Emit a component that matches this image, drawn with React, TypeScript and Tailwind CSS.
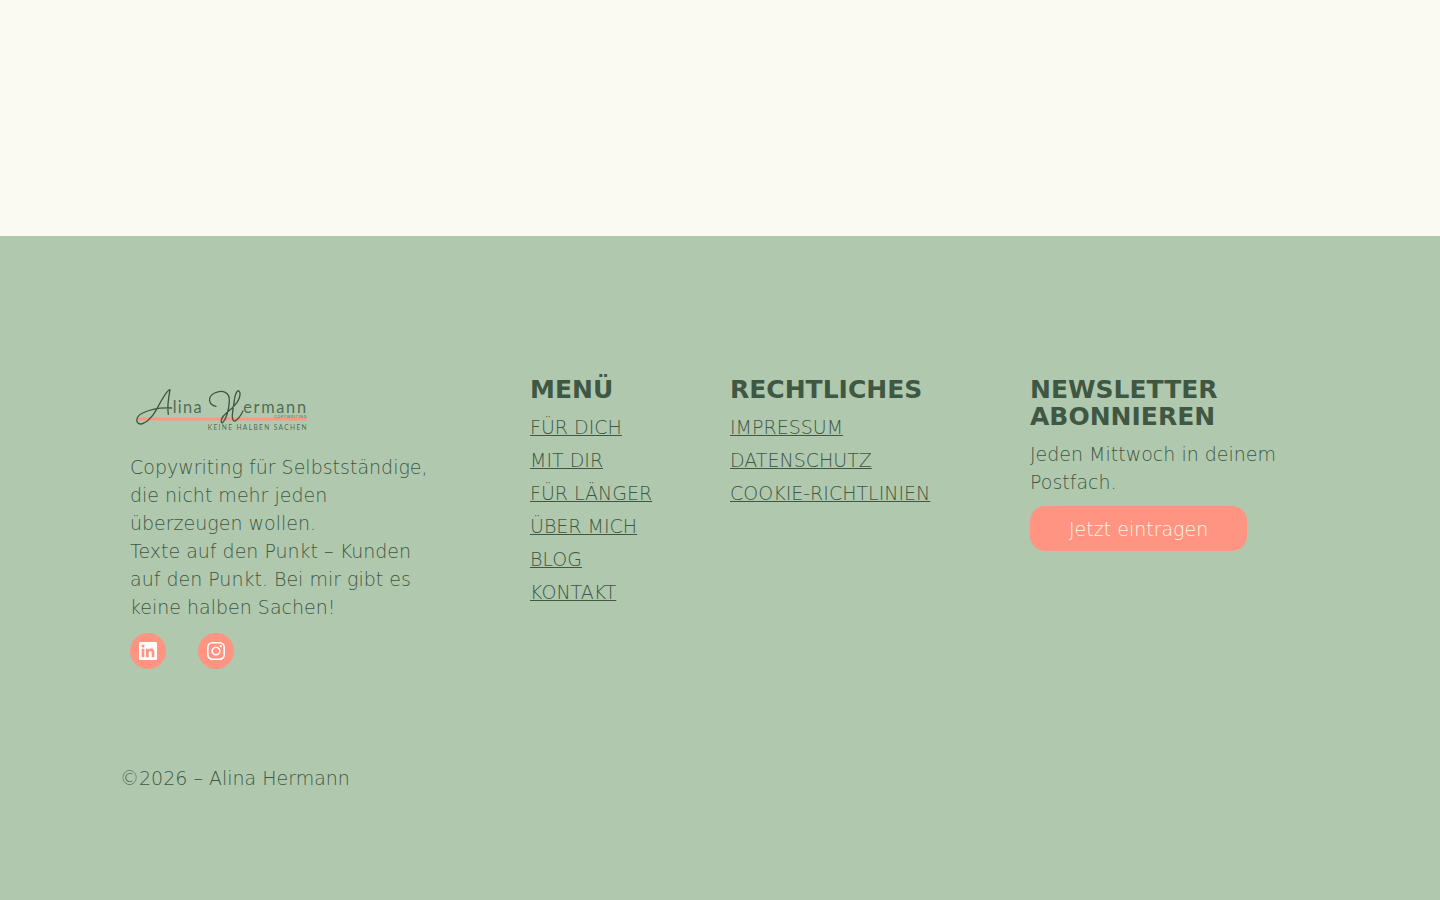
import React from 'react';

interface FooterLink {
  label: string;
  href: string;
}

interface LinkColumnProps {
  title: string;
  links: FooterLink[];
}

const menuLinks: FooterLink[] = [
  { label: 'FÜR DICH', href: '#fuer-dich' },
  { label: 'MIT DIR', href: '#mit-dir' },
  { label: 'FÜR LÄNGER', href: '#fuer-laenger' },
  { label: 'ÜBER MICH', href: '#ueber-mich' },
  { label: 'BLOG', href: '#blog' },
  { label: 'KONTAKT', href: '#kontakt' },
];

const legalLinks: FooterLink[] = [
  { label: 'IMPRESSUM', href: '#impressum' },
  { label: 'DATENSCHUTZ', href: '#datenschutz' },
  { label: 'COOKIE-RICHTLINIEN', href: '#cookie-richtlinien' },
];

const Logo: React.FC = () => (
  <svg viewBox="30 21 558 150" className="block w-[186px] h-[50px]" role="img" aria-label="Alina Hermann">
    <path d="M52 132H560" stroke="#ff9483" strokeWidth="9" />
    <g fill="none" stroke="#3f5743" strokeWidth="4" strokeLinecap="round" strokeLinejoin="round">
      <path d="M145 118C141 95 146 65 150 44C140 44 120 85 108 106C96 128 75 148 60 147C46 145 46 124 68 114C95 101 125 97 155 99" />
      <path d="M288 94C266 90 260 66 284 54C308 43 330 52 328 80C326 104 318 132 308 143C300 146 302 126 320 113C345 95 362 72 360 54C356 38 346 52 343 76C340 102 330 138 345 138C356 134 362 122 369 108" />
    </g>
    <g fill="#3f5743" fillOpacity="0.85" fontFamily="Lato, sans-serif" fontWeight="400">
      <text x="158" y="115" fontSize="49" letterSpacing="4">lina</text>
      <text x="370" y="115" fontSize="49" letterSpacing="5">ermann</text>
      <text x="463" y="128" fontSize="11" letterSpacing="2">COPYWRITING</text>
      <text x="263" y="164" fontSize="20" letterSpacing="4">KEINE HALBEN SACHEN</text>
    </g>
  </svg>
);

const Heading: React.FC<{ children: React.ReactNode }> = ({ children }) => (
  <h2 className="text-[25px] leading-[27px] font-bold uppercase">{children}</h2>
);

const LinkColumn: React.FC<LinkColumnProps> = ({ title, links }) => (
  <nav aria-label={title} className="px-[10px]">
    <Heading>{title}</Heading>
    <ul className="mt-[10px] space-y-[5px]">
      {links.map((link) => (
        <li key={link.href}>
          <a href={link.href} className="block underline whitespace-nowrap">{link.label}</a>
        </li>
      ))}
    </ul>
  </nav>
);

const App: React.FC = () => {
  return (
    <div className="min-h-screen flex flex-col bg-[#faf9f2] font-['DejaVu_Sans',sans-serif] text-[#3f5743]">
      <main className="h-[236px]" />

      <footer className="grow bg-[#b0c9ae] px-5 pt-[140px] pb-24 text-[19px] leading-7 font-extralight">
        <div className="max-w-[1200px] mx-auto">
          <div className="grid grid-cols-[4fr_2fr_3fr_3fr]">
            {/* Brand */}
            <div className="pt-1.5 pl-[10px] pr-20">
              <Logo />
              <p className="mt-[21px]">
                Copywriting für Selbstständige, die nicht mehr jeden überzeugen wollen.
                <br />
                Texte auf den Punkt – Kunden auf den Punkt. Bei mir gibt es keine halben Sachen!
              </p>
              <div className="mt-3 flex gap-8">
                <a href="#linkedin" aria-label="LinkedIn" className="size-9 rounded-full bg-[#ff9483] text-white flex items-center justify-center">
                  <svg viewBox="0 0 24 24" className="size-6" fill="currentColor">
                    <path d="M19.7 3H4.3C3.582 3 3 3.582 3 4.3v15.4c0 .718.582 1.3 1.3 1.3h15.4c.718 0 1.3-.582 1.3-1.3V4.3c0-.718-.582-1.3-1.3-1.3zM8.339 18.338H5.667v-8.59h2.672v8.59zM7.004 8.574a1.548 1.548 0 1 1 0-3.096 1.548 1.548 0 0 1 0 3.096zM18.339 18.338H15.67v-4.177c0-.996-.017-2.278-1.387-2.278-1.389 0-1.601 1.086-1.601 2.206v4.249h-2.667v-8.59h2.559v1.174h.037c.356-.675 1.227-1.387 2.526-1.387 2.703 0 3.203 1.779 3.203 4.092v4.711z" />
                  </svg>
                </a>
                <a href="#instagram" aria-label="Instagram" className="size-9 rounded-full bg-[#ff9483] text-white flex items-center justify-center">
                  <svg viewBox="0 0 24 24" className="size-6" fill="none" stroke="currentColor" strokeWidth="1.6">
                    <rect x="3.8" y="3.8" width="16.4" height="16.4" rx="4.6" />
                    <circle cx="12" cy="12" r="3.8" />
                    <circle cx="16.8" cy="7.2" r="1.1" fill="currentColor" stroke="none" />
                  </svg>
                </a>
              </div>
            </div>

            <LinkColumn title="Menü" links={menuLinks} />
            <LinkColumn title="Rechtliches" links={legalLinks} />

            {/* Newsletter */}
            <div className="px-[10px]">
              <Heading>Newsletter abonnieren</Heading>
              <p className="mt-[10px]">Jeden Mittwoch in deinem Postfach.</p>
              <button type="button" className="mt-[10px] h-[45px] px-[39px] rounded-[15px] bg-[#ff9483] text-[#fff5e0] cursor-pointer">
                Jetzt eintragen
              </button>
            </div>
          </div>

          <p className="mt-[95px]">©2026 – Alina Hermann</p>
        </div>
      </footer>
    </div>
  );
};

export default App;
